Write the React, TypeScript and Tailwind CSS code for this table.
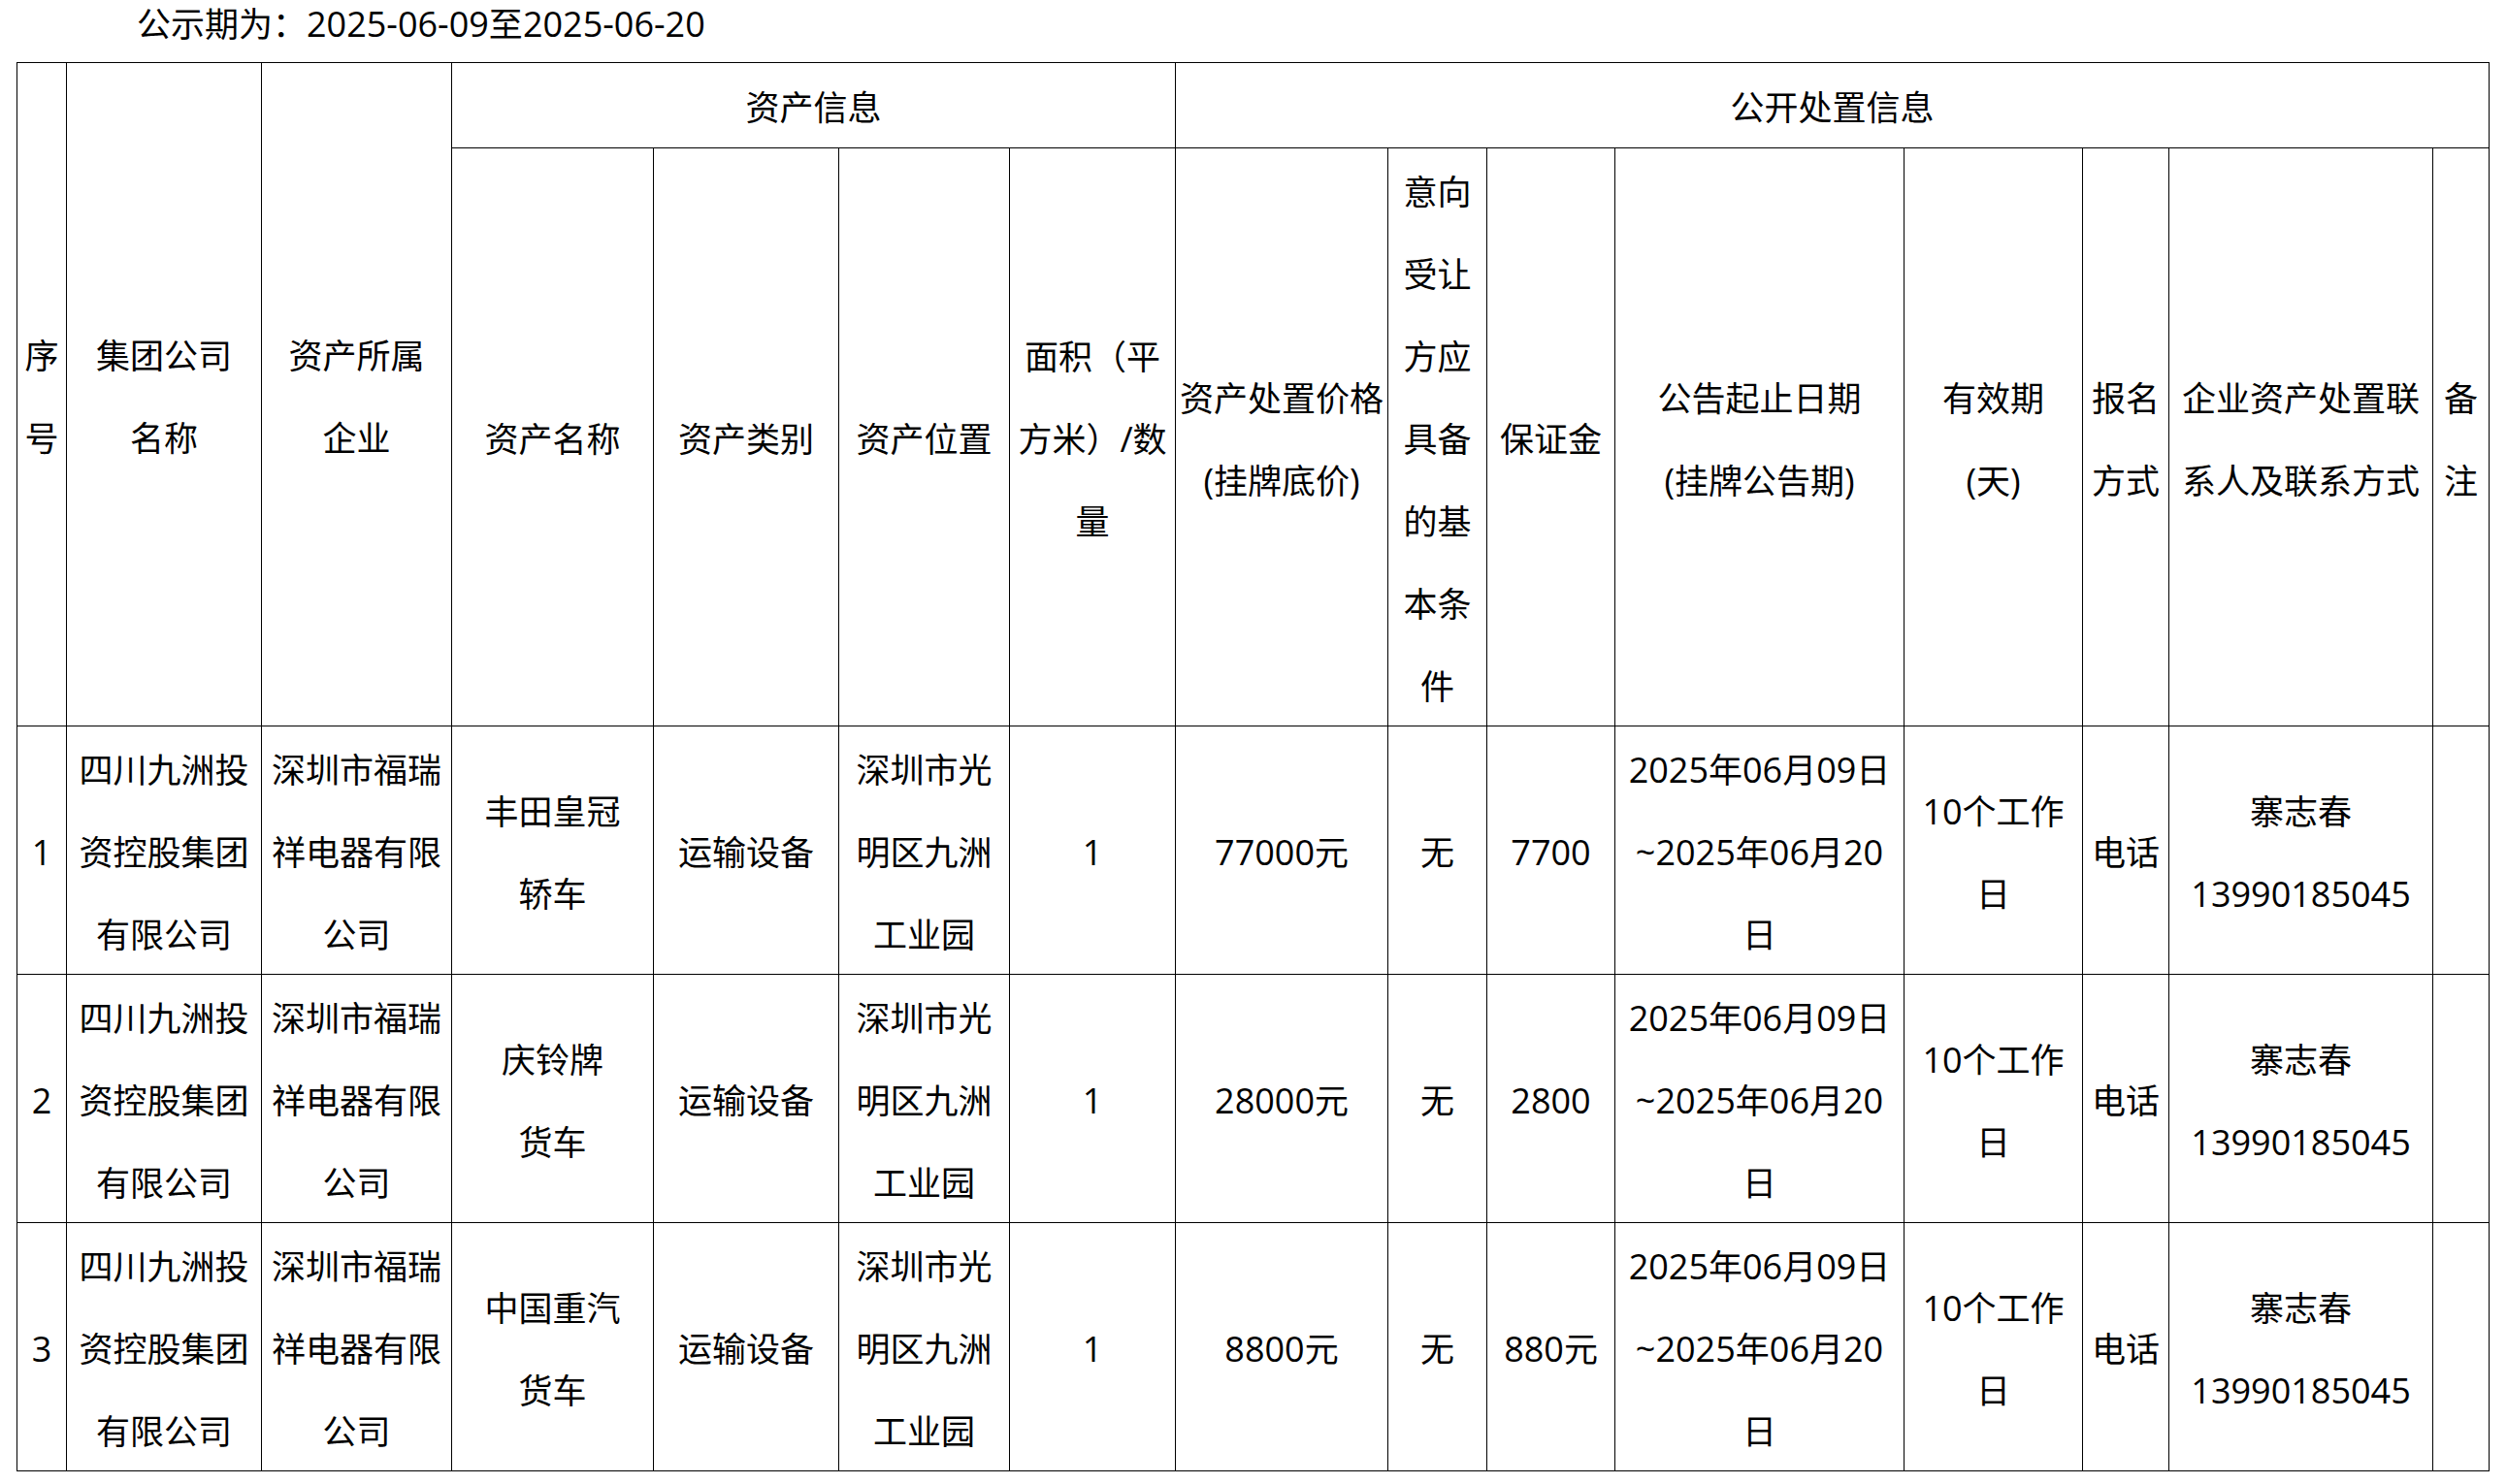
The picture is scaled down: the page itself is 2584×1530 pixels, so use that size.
import type { ReactNode } from "react"

type Row = {
  no: string
  group: string[]
  owner: string[]
  name: string[]
  kind: string
  place: string[]
  qty: string
  price: string
  cond: string
  deposit: string
  date: string[]
  period: string[]
  method: string
  contact: string[]
}

const colWidths = [51, 201, 196, 208, 191, 176, 171, 219, 102, 132, 298, 184, 89, 272, 58]

const base = {
  group: ["四川九洲投", "资控股集团", "有限公司"],
  owner: ["深圳市福瑞", "祥电器有限", "公司"],
  kind: "运输设备",
  place: ["深圳市光", "明区九洲", "工业园"],
  qty: "1",
  cond: "无",
  date: ["2025年06月09日", "~2025年06月20", "日"],
  period: ["10个工作", "日"],
  method: "电话",
  contact: ["寨志春", "13990185045"],
}

const rows: Row[] = [
  { ...base, no: "1", name: ["丰田皇冠", "轿车"], price: "77000元", deposit: "7700" },
  { ...base, no: "2", name: ["庆铃牌", "货车"], price: "28000元", deposit: "2800" },
  { ...base, no: "3", name: ["中国重汽", "货车"], price: "8800元", deposit: "880元" },
]

// latin runs (digits, dashes, parens) are set a little larger, like the Segoe digits of the original
function Txt({ s }: { s: string }) {
  const parts = s.split(/([\x20-\x7e]+)/).filter(Boolean)
  return (
    <>
      {parts.map((p, i) =>
        /^[\x20-\x7e]+$/.test(p) ? (
          <span key={i} className="font-['Open_Sans',sans-serif] text-[36px] leading-none">
            {p}
          </span>
        ) : (
          <span key={i}>{p}</span>
        ),
      )}
    </>
  )
}

function Lines({ items }: { items: string[] }) {
  return (
    <>
      {items.map((t, i) => (
        <div key={i} className="whitespace-nowrap">
          <Txt s={t} />
        </div>
      ))}
    </>
  )
}

function Th({ children, colSpan, rowSpan }: { children: ReactNode; colSpan?: number; rowSpan?: number }) {
  return (
    <th colSpan={colSpan} rowSpan={rowSpan} className="border border-black p-0 text-center align-middle font-normal">
      {children}
    </th>
  )
}

function Td({ children }: { children: ReactNode }) {
  return <td className="border border-black p-0 text-center align-middle">{children}</td>
}

export default function App() {
  return (
    <div className="min-h-screen bg-white font-['Noto_Sans_CJK_SC',sans-serif] text-[35px] leading-[85px] text-black">
      <div className="h-[45px] pl-[141px] leading-[45px] whitespace-nowrap">
        <Txt s="公示期为：2025-06-09至2025-06-20" />
      </div>
      <table className="mt-[19px] ml-[17px] w-[2548px] table-fixed border-collapse">
        <colgroup>
          {colWidths.map((w, i) => (
            <col key={i} style={{ width: w }} />
          ))}
        </colgroup>
        <thead>
          <tr className="h-[88px]">
            <Th rowSpan={2}>
              <Lines items={["序", "号"]} />
            </Th>
            <Th rowSpan={2}>
              <Lines items={["集团公司", "名称"]} />
            </Th>
            <Th rowSpan={2}>
              <Lines items={["资产所属", "企业"]} />
            </Th>
            <Th colSpan={4}>资产信息</Th>
            <Th colSpan={8}>公开处置信息</Th>
          </tr>
          <tr>
            <Th>资产名称</Th>
            <Th>资产类别</Th>
            <Th>资产位置</Th>
            <Th>
              <Lines items={["面积（平", "方米）/数", "量"]} />
            </Th>
            <Th>
              <Lines items={["资产处置价格", "(挂牌底价)"]} />
            </Th>
            <Th>
              <Lines items={["意向", "受让", "方应", "具备", "的基", "本条", "件"]} />
            </Th>
            <Th>保证金</Th>
            <Th>
              <Lines items={["公告起止日期", "(挂牌公告期)"]} />
            </Th>
            <Th>
              <Lines items={["有效期", "(天)"]} />
            </Th>
            <Th>
              <Lines items={["报名", "方式"]} />
            </Th>
            <Th>
              <Lines items={["企业资产处置联", "系人及联系方式"]} />
            </Th>
            <Th>
              <Lines items={["备", "注"]} />
            </Th>
          </tr>
        </thead>
        <tbody>
          {rows.map((r) => (
            <tr key={r.no}>
              <Td>
                <Txt s={r.no} />
              </Td>
              <Td>
                <Lines items={r.group} />
              </Td>
              <Td>
                <Lines items={r.owner} />
              </Td>
              <Td>
                <Lines items={r.name} />
              </Td>
              <Td>{r.kind}</Td>
              <Td>
                <Lines items={r.place} />
              </Td>
              <Td>
                <Txt s={r.qty} />
              </Td>
              <Td>
                <Txt s={r.price} />
              </Td>
              <Td>{r.cond}</Td>
              <Td>
                <Txt s={r.deposit} />
              </Td>
              <Td>
                <Lines items={r.date} />
              </Td>
              <Td>
                <Lines items={r.period} />
              </Td>
              <Td>{r.method}</Td>
              <Td>
                <Lines items={r.contact} />
              </Td>
              <Td>{""}</Td>
            </tr>
          ))}
        </tbody>
      </table>
    </div>
  )
}
